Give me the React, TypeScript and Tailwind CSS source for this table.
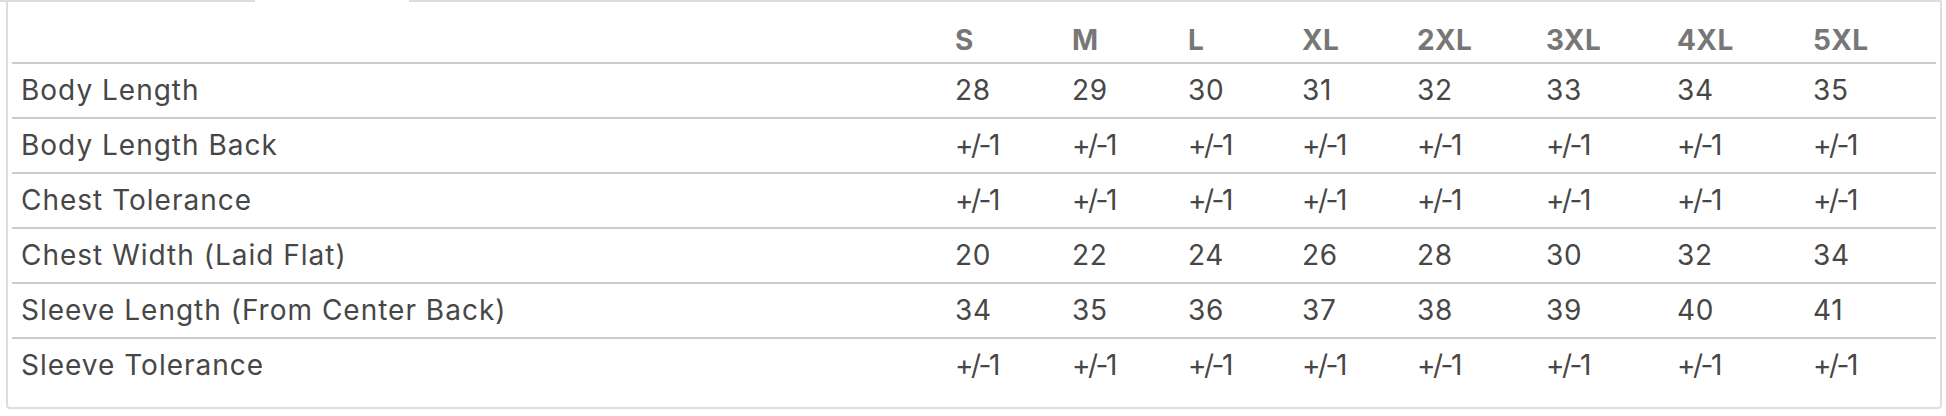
const sizes = ["S", "M", "L", "XL", "2XL", "3XL", "4XL", "5XL"];

const rows: { label: string; values: string[] }[] = [
  { label: "Body Length", values: ["28", "29", "30", "31", "32", "33", "34", "35"] },
  { label: "Body Length Back", values: Array(8).fill("+/-1") },
  { label: "Chest Tolerance", values: Array(8).fill("+/-1") },
  { label: "Chest Width (Laid Flat)", values: ["20", "22", "24", "26", "28", "30", "32", "34"] },
  { label: "Sleeve Length (From Center Back)", values: ["34", "35", "36", "37", "38", "39", "40", "41"] },
  { label: "Sleeve Tolerance", values: Array(8).fill("+/-1") },
];

const grid =
  "grid grid-cols-[933px_117px_116px_114px_115px_129px_131px_136px_133px]";

export default function App() {
  return (
    <div className="h-[416px] w-[1946px] bg-white font-['Inter','Liberation_Sans',sans-serif] text-[28px] leading-[28px]">
      {/* tab strip: active tab leaves a gap in the top rule */}
      <div className="flex h-[2px]">
        <div className="w-[255px] bg-[#dddddd]" />
        <div className="w-[154px]" />
        <div className="w-[1533px] rounded-tr-[4px] bg-[#dddddd]" />
      </div>

      <div className="ml-[6px] h-[407px] w-[1936px] rounded-b-[4px] border-x-2 border-b-2 border-[#dddddd] pl-[4px]">
        <div className="w-[1924px]">
          <div className={`${grid} h-[62px] border-b-2 border-[#cccccc] font-bold tracking-[0.4px] text-[#777777]`}>
            <div />
            {sizes.map((s) => (
              <div key={s} className="flex items-end pb-[8px] pl-[10px]">
                {s}
              </div>
            ))}
          </div>

          {rows.map((row, i) => (
            <div
              key={row.label}
              className={`${grid} text-[#474747] ${
                i < rows.length - 1
                  ? "h-[55px] border-b-2 border-[#cccccc]"
                  : "h-[53px]"
              }`}
            >
              <div className="flex items-center pb-[2px] pl-[9px] tracking-[1px]">
                {row.label}
              </div>
              {row.values.map((v, j) => (
                <div
                  key={j}
                  className={`flex items-center pb-[2px] pl-[10px] ${
                    v === "+/-1" ? "tracking-[-2.5px]" : "tracking-[0.6px]"
                  }`}
                >
                  {v}
                </div>
              ))}
            </div>
          ))}
        </div>
      </div>
    </div>
  );
}
